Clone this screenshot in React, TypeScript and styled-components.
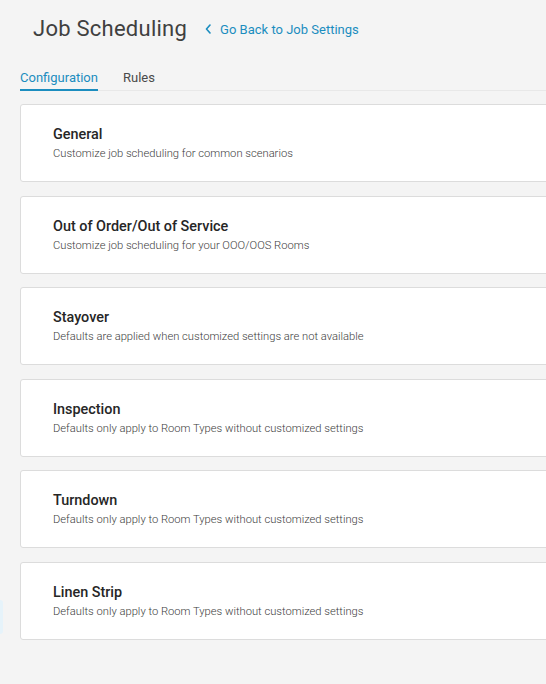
import React from "react";
import styled, { createGlobalStyle } from "styled-components";

const Global = createGlobalStyle`
  html, body {
    margin: 0;
    padding: 0;
    background: #f4f4f4;
    overflow: hidden;
  }
  body {
    font-family: Roboto, "Liberation Sans", Arial, sans-serif;
    -webkit-font-smoothing: antialiased;
  }
`;

const Page = styled.div`
  position: relative;
  width: 546px;
  height: 684px;
  padding: 0 0 0 20px;
  box-sizing: border-box;
  overflow: hidden;
`;

const Content = styled.div`
  width: 600px;
`;

const Header = styled.div`
  display: flex;
  align-items: center;
  gap: 18px;
  padding: 12px 0 0 13px;
  height: 32px;
`;

const Title = styled.h1`
  margin: 0;
  font-size: 22px;
  font-weight: 400;
  color: #404040;
  letter-spacing: 0.25px;
`;

const BackLink = styled.a`
  display: flex;
  align-items: center;
  gap: 9px;
  font-size: 13px;
  color: #1b8dbf;
  text-decoration: none;
  padding-top: 2px;
`;

const Tabs = styled.div`
  display: flex;
  gap: 25px;
  margin-top: 24px;
  border-bottom: 1px solid #e8e8e8;
`;

const Tab = styled.div<{ $active?: boolean }>`
  font-size: 13px;
  line-height: 16px;
  padding: 2px 0 3px;
  color: ${(p) => (p.$active ? "#1b8dbf" : "#4a4a4a")};
  border-bottom: 2px solid ${(p) => (p.$active ? "#1b8dbf" : "transparent")};
  margin-bottom: -1px;
`;

const CardList = styled.div`
  display: flex;
  flex-direction: column;
  gap: 13.6px;
  margin-top: 13px;
`;

const Card = styled.div`
  background: #fff;
  border: 1px solid #dcdcdc;
  border-radius: 3px;
  height: 78px;
  box-sizing: border-box;
  padding: 21px 0 0 32px;
`;

const CardTitle = styled.div`
  font-size: 14.4px;
  font-weight: 500;
  color: #262626;
  line-height: 18px;
`;

const CardDesc = styled.div`
  font-size: 11.2px;
  font-weight: 300;
  color: #3c3c3c;
  line-height: 14px;
  margin-top: 3px;
`;

const SideHint = styled.div`
  position: absolute;
  left: -6px;
  top: 600px;
  width: 9px;
  height: 34px;
  border-radius: 3px;
  background: #e6f3fa;
`;

const items = [
  ["General", "Customize job scheduling for common scenarios"],
  ["Out of Order/Out of Service", "Customize job scheduling for your OOO/OOS Rooms"],
  ["Stayover", "Defaults are applied when customized settings are not available"],
  ["Inspection", "Defaults only apply to Room Types without customized settings"],
  ["Turndown", "Defaults only apply to Room Types without customized settings"],
  ["Linen Strip", "Defaults only apply to Room Types without customized settings"],
];

export default function App() {
  return (
    <>
      <Global />
      <Page>
        <SideHint />
        <Content>
          <Header>
            <Title>Job Scheduling</Title>
            <BackLink href="#">
              <svg width="6" height="10" viewBox="0 0 6 10">
                <path d="M5 1 L1.5 5 L5 9" fill="none" stroke="#1b8dbf" strokeWidth="1.6" strokeLinecap="round" strokeLinejoin="round" />
              </svg>
              Go Back to Job Settings
            </BackLink>
          </Header>
          <Tabs>
            <Tab $active>Configuration</Tab>
            <Tab>Rules</Tab>
          </Tabs>
          <CardList>
            {items.map(([t, d]) => (
              <Card key={t}>
                <CardTitle>{t}</CardTitle>
                <CardDesc>{d}</CardDesc>
              </Card>
            ))}
          </CardList>
        </Content>
      </Page>
    </>
  );
}
